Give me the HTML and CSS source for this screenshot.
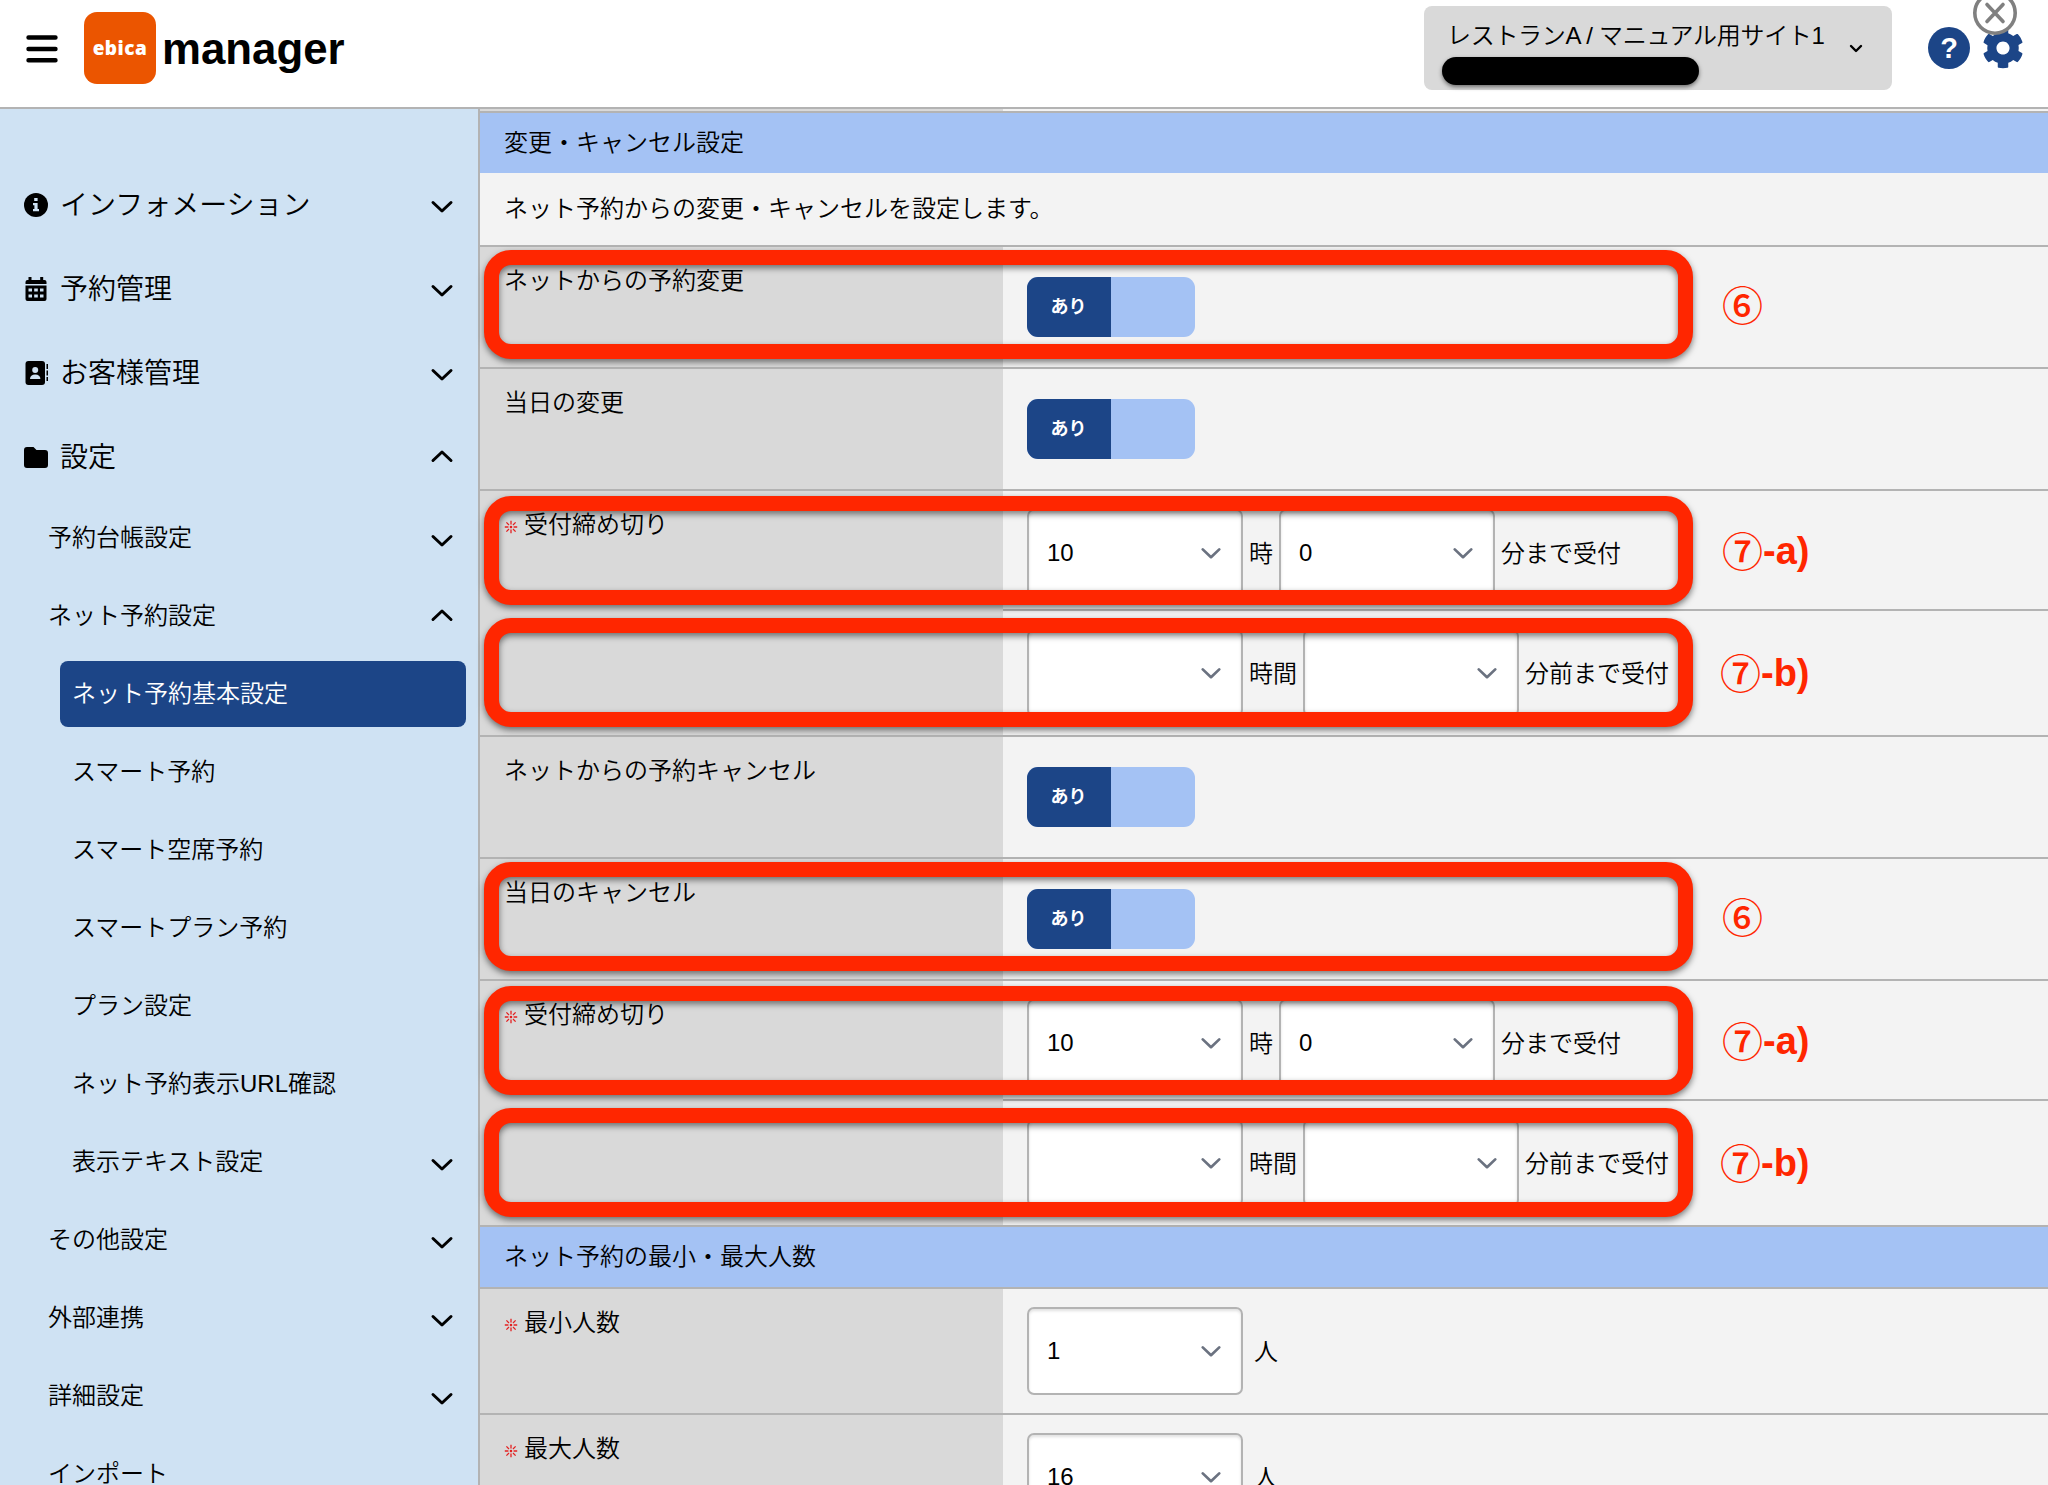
FILE: index.html
```html
<!DOCTYPE html>
<html lang="ja">
<head>
<meta charset="utf-8">
<title>ebica manager</title>
<link rel="stylesheet" href="styles.css">
</head>
<body>
<svg class="defs" width="0" height="0" aria-hidden="true">
  <symbol id="down" viewBox="0 0 24 14"><path d="M3 2.5l9 8.5 9-8.5"/></symbol>
  <symbol id="up" viewBox="0 0 24 14"><path d="M3 11.5l9-8.5 9 8.5"/></symbol>
  <symbol id="req" viewBox="-7 -7 14 14"><path d="M0-6.200V-2.600M0 6.200V2.600M-6.200 0H-2.600M6.200 0H2.600M-4.600-4.600L-2-2M4.600 4.600L2 2M-4.600 4.600L-2 2M4.600-4.600L2-2"/><circle r=".6"/></symbol>
  <symbol id="gear" viewBox="0 0 512 512"><path fill-rule="evenodd" d="M487.4 315.7l-42.6-24.6c4.3-23.2 4.3-47 0-70.2l42.6-24.6c4.9-2.8 7.1-8.6 5.5-14-11.1-35.6-30-67.8-54.7-94.6-3.8-4.1-10-5.1-14.8-2.3L380.8 110c-17.9-15.4-38.5-27.3-60.8-35.1V25.8c0-5.6-3.9-10.5-9.4-11.7-36.7-8.2-74.3-7.8-109.2 0-5.5 1.2-9.4 6.1-9.4 11.7V75c-22.2 7.9-42.8 19.8-60.8 35.1L88.7 85.5c-4.9-2.8-11-1.9-14.8 2.3-24.7 26.7-43.6 58.9-54.7 94.6-1.7 5.4.6 11.2 5.5 14L67.3 221c-4.3 23.2-4.3 47 0 70.2l-42.6 24.6c-4.9 2.8-7.1 8.6-5.5 14 11.1 35.6 30 67.8 54.7 94.6 3.8 4.1 10 5.1 14.8 2.3l42.6-24.6c17.9 15.4 38.5 27.3 60.8 35.1v49.2c0 5.6 3.9 10.5 9.4 11.7 36.7 8.2 74.3 7.8 109.2 0 5.5-1.2 9.4-6.1 9.4-11.7v-49.2c22.2-7.9 42.8-19.8 60.8-35.1l42.6 24.6c4.9 2.8 11 1.9 14.8-2.3 24.7-26.7 43.6-58.9 54.7-94.6 1.5-5.5-.7-11.3-5.6-14.1zM256 336c-44.1 0-80-35.9-80-80s35.9-80 80-80 80 35.9 80 80-35.9 80-80 80z"/></symbol>
</svg>

<header class="header">
  <svg class="burger" viewBox="0 0 32 28"><path d="M2.500 2.500h27M2.500 14h27M2.500 25.300h27"/></svg>
  <span class="logo">ebica</span>
  <span class="brand">manager</span>
  <div class="site">
    <div class="site-info">
      <span class="site-name">レストランA / マニュアル用サイト1</span>
      <span class="site-mask"></span>
    </div>
    <svg class="site-arrow" viewBox="0 0 14 10"><path d="M2 2l5 5 5-5"/></svg>
  </div>
  <span class="help">?</span>
  <svg class="gear"><use href="#gear"/></svg>
  <svg class="close" viewBox="0 0 46 46"><circle cx="23" cy="23" r="20.2"/><path d="M15 14.500l16 17M31 14.500l-16 17"/></svg>
</header>

<div class="body">
  <nav class="side">
    <div class="item top"><svg class="ico" viewBox="0 0 24 24"><circle cx="12" cy="12" r="12"/><path class="cut" d="M10.2 5h3.4v3.1h-3.4zM9 10h4.6v6H15v2.2H9V16h1.4v-3.8H9z"/></svg><span>インフォメーション</span><svg class="chev"><use href="#down"/></svg></div>
    <div class="item top"><svg class="ico" viewBox="0 0 24 24"><path d="M4.500 0h3v3h8.700V0h3v3h1.300a2 2 0 0 1 2 2v2H1.500V5a2 2 0 0 1 2-2h1z"/><path fill-rule="evenodd" d="M1.500 8.500h21V22a2 2 0 0 1-2 2h-17a2 2 0 0 1-2-2zM4.500 11.500v3h3.500v-3zM10.200 11.500v3h3.600v-3zM16 11.500v3h3.500v-3zM4.500 17.500v3h3.500v-3zM10.200 17.500v3h3.600v-3zM16 17.500v3h3.500v-3z"/></svg><span>予約管理</span><svg class="chev"><use href="#down"/></svg></div>
    <div class="item top"><svg class="ico" viewBox="0 0 24 24"><rect x="1.500" width="19.500" height="24" rx="3"/><path d="M22.500 3H24v5h-1.500zM22.500 9.500H24v5h-1.500zM22.500 16H24v4h-1.500z"/><circle class="cut" cx="11.200" cy="9" r="3"/><path class="cut" d="M6 18c0-3 2-4.500 5.200-4.500s5.200 1.500 5.200 4.500z"/></svg><span>お客様管理</span><svg class="chev"><use href="#down"/></svg></div>
    <div class="item top"><svg class="ico" viewBox="0 0 24 24"><path d="M3 2h6.500l3 3H21a3 3 0 0 1 3 3v12a3 3 0 0 1-3 3H3a3 3 0 0 1-3-3V5a3 3 0 0 1 3-3z"/></svg><span>設定</span><svg class="chev chev-up"><use href="#up"/></svg></div>
    <div class="item sub"><span>予約台帳設定</span><svg class="chev"><use href="#down"/></svg></div>
    <div class="item sub"><span>ネット予約設定</span><svg class="chev chev-up"><use href="#up"/></svg></div>
    <div class="item leaf active"><span>ネット予約基本設定</span></div>
    <div class="item leaf"><span>スマート予約</span></div>
    <div class="item leaf"><span>スマート空席予約</span></div>
    <div class="item leaf"><span>スマートプラン予約</span></div>
    <div class="item leaf"><span>プラン設定</span></div>
    <div class="item leaf"><span>ネット予約表示URL確認</span></div>
    <div class="item leaf"><span>表示テキスト設定</span><svg class="chev"><use href="#down"/></svg></div>
    <div class="item sub"><span>その他設定</span><svg class="chev"><use href="#down"/></svg></div>
    <div class="item sub"><span>外部連携</span><svg class="chev"><use href="#down"/></svg></div>
    <div class="item sub"><span>詳細設定</span><svg class="chev"><use href="#down"/></svg></div>
    <div class="item sub"><span>インポート</span></div>
  </nav>

  <main class="main">
    <div class="row sliver"><div class="label"></div><div class="field"></div></div>
    <h2 class="band">変更・キャンセル設定</h2>
    <p class="desc">ネット予約からの変更・キャンセルを設定します。</p>

    <div class="row"><div class="label">ネットからの予約変更</div><div class="field"><div class="toggle"><span>あり</span></div></div></div>
    <div class="row"><div class="label">当日の変更</div><div class="field"><div class="toggle"><span>あり</span></div></div></div>
    <div class="row">
      <div class="label"><svg class="req"><use href="#req"/></svg>受付締め切り</div>
      <div class="stack">
        <div class="field line"><div class="select">10<svg><use href="#down"/></svg></div><span>時</span><div class="select">0<svg><use href="#down"/></svg></div><span>分まで受付</span></div>
        <div class="field"><div class="select"><svg><use href="#down"/></svg></div><span>時間</span><div class="select"><svg><use href="#down"/></svg></div><span>分前まで受付</span></div>
      </div>
    </div>
    <div class="row"><div class="label">ネットからの予約キャンセル</div><div class="field"><div class="toggle"><span>あり</span></div></div></div>
    <div class="row"><div class="label">当日のキャンセル</div><div class="field"><div class="toggle"><span>あり</span></div></div></div>
    <div class="row">
      <div class="label"><svg class="req"><use href="#req"/></svg>受付締め切り</div>
      <div class="stack">
        <div class="field line"><div class="select">10<svg><use href="#down"/></svg></div><span>時</span><div class="select">0<svg><use href="#down"/></svg></div><span>分まで受付</span></div>
        <div class="field"><div class="select"><svg><use href="#down"/></svg></div><span>時間</span><div class="select"><svg><use href="#down"/></svg></div><span>分前まで受付</span></div>
      </div>
    </div>
    <h2 class="band ruled">ネット予約の最小・最大人数</h2>
    <div class="row"><div class="label"><svg class="req"><use href="#req"/></svg>最小人数</div><div class="field people"><div class="select">1<svg><use href="#down"/></svg></div><span>人</span></div></div>
    <div class="row"><div class="label"><svg class="req"><use href="#req"/></svg>最大人数</div><div class="field people"><div class="select">16<svg><use href="#down"/></svg></div><span>人</span></div></div>
  </main>
</div>

<!-- Callouts laid over the form -->
<div class="mark m1"></div><span class="note m1"><b>⑥</b></span>
<div class="mark m2"></div><span class="note m2"><b>⑦</b>-a)</span>
<div class="mark m3"></div><span class="note wide m3"><b>⑦</b>-b)</span>
<div class="mark m4"></div><span class="note m4"><b>⑥</b></span>
<div class="mark m5"></div><span class="note m5"><b>⑦</b>-a)</span>
<div class="mark m6"></div><span class="note wide m6"><b>⑦</b>-b)</span>
</body>
</html>
```
FILE: styles.css
```css
* { box-sizing: border-box; }
body {
  margin: 0;
  width: 2048px;
  height: 1485px;
  overflow: hidden;
  position: relative;
  display: flex;
  flex-direction: column;
  background: #fff;
  color: #000;
  font: 350 24px/36px "Liberation Sans", "Noto Sans CJK JP", sans-serif;
}
.defs { position: absolute; }

/* Header */
.header {
  position: relative;
  flex: none;
  height: 109px;
  border-bottom: 2px solid #b3b3b3;
  display: flex;
  align-items: flex-start;
  padding-left: 26px;
}
.burger { width: 32px; height: 28px; margin-top: 35px; fill: none; stroke: #000; stroke-width: 4.4; stroke-linecap: round; }
.logo {
  width: 72px; height: 72px; margin: 12px 0 0 26px;
  border-radius: 13px; background: #eb5500; color: #fff;
  font: 800 19px/73px "Open Sans", sans-serif; text-align: center; letter-spacing: .5px;
}
.brand { margin: 23px 0 0 6px; font: bold 43.800px/52px "Liberation Sans", sans-serif; }
.site {
  width: 468px; height: 84px; margin: 6px 0 0 auto;
  border-radius: 8px; background: #d9d9d9;
  display: flex; justify-content: space-between; padding: 12px 29px 0 18px;
}
.site-info { display: flex; flex-direction: column; }
.site-name { padding-left: 5px; letter-spacing: -.3px; }
.site-mask { width: 257px; height: 28px; margin-top: 3px; border-radius: 14px; background: #000; box-shadow: 0 2px 4px rgba(0,0,0,.5); }
.site-arrow { width: 14px; height: 10px; margin-top: 26px; fill: none; stroke: #000; stroke-width: 2.4; stroke-linecap: round; stroke-linejoin: round; }
.help {
  width: 42px; height: 42px; margin: 27px 0 0 36px; border-radius: 50%;
  background: #1c4587; color: #fff; text-align: center; font: bold 29px/42px "Liberation Sans", sans-serif;
}
.gear { width: 42px; height: 42px; margin: 27px 24px 0 12px; fill: #1c4587; }
.close { position: absolute; left: 1971.500px; top: -10.500px; width: 46px; height: 46px; fill: #fff; stroke: #808080; stroke-width: 3.600; stroke-linecap: round; }

.body { flex: 1; min-height: 0; display: flex; }

/* Sidebar */
.side { width: 480px; background: #cfe2f3; border-right: 2px solid #b3b3b3; padding-top: 54px; overflow: hidden; }
.item { display: flex; align-items: center; height: 78px; padding: 0 24px 0 48px; }
.item span { padding-bottom: 1px; }
.top { height: 84px; padding-left: 24px; font-size: 28px; }
.top span { padding: 2px 0 0; }
.ico { width: 24px; height: 24px; margin-right: 12px; }
.cut { fill: #cfe2f3; }
.leaf { padding-left: 72px; }
.active { height: 66px; margin: 6px 12px 6px 60px; padding-left: 12px; border-radius: 8px; background: #1c4587; color: #fff; }
.chev { width: 24px; height: 14px; margin: 5px 0 0 auto; }
.chev, .select svg { fill: none; stroke: #000; stroke-width: 3; stroke-linecap: round; stroke-linejoin: round; }
.top .chev { margin-top: 3px; }
.item .chev-up { margin-top: -2px; }

/* Settings form */
.main { flex: 1; background: #f3f3f3; }
.band, .desc { margin: 0; font-size: 24px; font-weight: 350; padding-left: 24px; }
.band { height: 60px; line-height: 59px; background: #a4c2f4; }
.desc { height: 74px; line-height: 72px; border-bottom: 2px solid #b3b3b3; }
.ruled { height: 62px; border-bottom: 2px solid #b3b3b3; }
.row { display: flex; border-bottom: 2px solid #b3b3b3; }
.label { width: 523px; padding: 15.500px 24px; background: #d9d9d9; }
.req { width: 14px; height: 14px; margin: 0 6px 0 0; vertical-align: -1px; fill: #e32020; stroke: #e32020; stroke-width: 1.300; }
.stack { flex: 1; }
.field { flex: 1; display: flex; align-items: center; gap: 6px; padding: 18px 24px; }
.field > span { padding-top: 2px; }
.line { padding-bottom: 12px; border-bottom: 2px solid #b3b3b3; }
.people { gap: 11px; }
.sliver { height: 4px; }
.sliver .label, .sliver .field { padding-block: 0; }
.toggle { width: 168px; height: 60px; margin: 12px 0; border-radius: 11px; overflow: hidden; background: #a4c2f4; }
.toggle span { display: block; width: 84px; height: 60px; padding-right: 1px; background: #1c4587; color: #fff; text-align: center; font: bold 18px/57px "Noto Sans CJK JP", sans-serif; }
.select {
  width: 216px; height: 88px; flex: none; display: flex; align-items: center; justify-content: space-between;
  padding: 0 19px 0 18px; border: 2px solid #b3b3b3; border-radius: 7px; background: #fff;
  box-shadow: inset 0 2px 3px rgba(0,0,0,.12);
}
.select svg { width: 22px; height: 13px; margin-left: auto; stroke: #6b7280; }

/* Red frames and their numbers */
.mark { position: absolute; left: 484px; width: 1209px; height: 109px; border: 15px solid #ff2600; border-radius: 27px; filter: drop-shadow(0 3px 3px rgba(0,0,0,.5)); }
.m1 { top: 250px; }
.m2 { top: 496px; }
.m3 { top: 618px; }
.m4 { top: 862px; }
.m5 { top: 986px; }
.m6 { top: 1108px; }
.note { position: absolute; left: 1722px; display: flex; padding-top: 29px; white-space: nowrap; color: #ff2600; font: bold 38px/52px "Liberation Sans", sans-serif; }
.wide { left: 1720px; }
.note b { font: 500 41px/48px "Noto Sans CJK JP", sans-serif; }
```
